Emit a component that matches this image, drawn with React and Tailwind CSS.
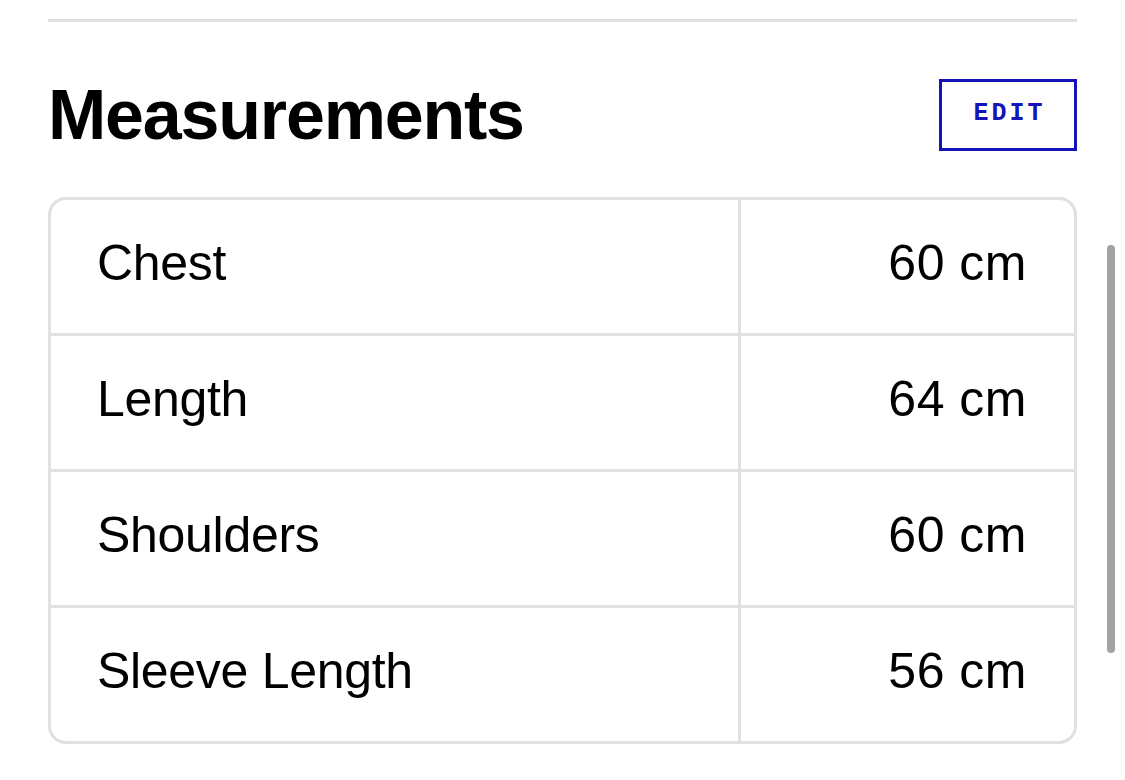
const rows = [
  { label: 'Chest', value: '60 cm' },
  { label: 'Length', value: '64 cm' },
  { label: 'Shoulders', value: '60 cm' },
  { label: 'Sleeve Length', value: '56 cm' },
];

export default function App() {
  return (
    <div className="relative min-h-[780px] bg-white px-[48px] pt-[19px] font-['Liberation_Sans',Arial,sans-serif] text-black">
      <div className="h-[3px] bg-[#e0e0e0]" />

      <div className="mt-[57px] flex h-[72px] items-center justify-between">
        <h2 className="text-[70px] font-bold leading-none tracking-[-1.2px]">Measurements</h2>
        <button className="flex h-[72px] w-[138px] items-center justify-center border-[3px] border-[#1414b8] pb-[2px] pl-[3px] font-['Liberation_Mono',monospace] text-[25px] font-bold tracking-[3px] text-[#1414b8]">
          EDIT
        </button>
      </div>

      <div className="mt-[46px] overflow-hidden rounded-[18px] border-[3px] border-[#e0e0e0]">
        {rows.map((row, i) => (
          <div
            key={row.label}
            className={`flex h-[133px] text-[50px] leading-none ${i > 0 ? 'h-[136px] border-t-[3px] border-[#e0e0e0]' : ''}`}
          >
            <div className="flex w-[690px] items-center border-r-[3px] border-[#e0e0e0] pb-[8px] pl-[46px] tracking-[-0.3px]">
              {row.label}
            </div>
            <div className="flex flex-1 items-center justify-end pb-[8px] pr-[47px] tracking-[0.5px]">
              {row.value}
            </div>
          </div>
        ))}
      </div>

      {/* scrollbar overlay */}
      <div className="absolute left-[1107px] top-[245px] h-[408px] w-[8px] rounded-full bg-[#a3a3a3]" />
    </div>
  );
}
